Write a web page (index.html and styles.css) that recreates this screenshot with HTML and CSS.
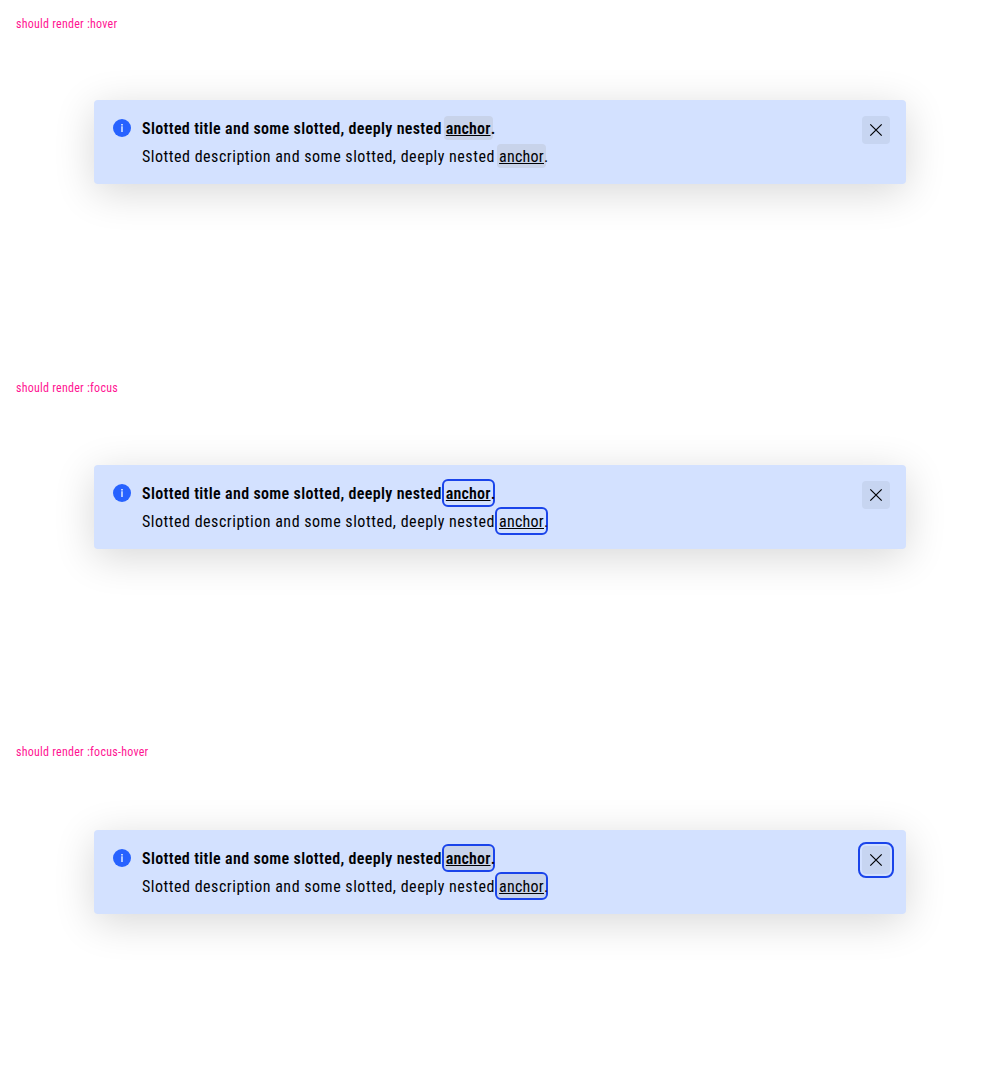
FILE: index.html
```html
<!DOCTYPE html>
<html lang="en">
<head>
<meta charset="utf-8">
<title>Banner states</title>
<link rel="stylesheet" href="styles.css">
</head>
<body>
<section class="state state--hover">
  <p class="label">should render :hover</p>
  <div class="banner">
    <svg class="info" viewBox="0 0 24 24"><circle cx="12" cy="12" r="9"/><path d="M11.1 8h1.8v1.5h-1.8zM11.2 10.3h1.6V16h-1.6z"/></svg>
    <div class="content">
      <h5 class="title">Slotted title and some slotted, deeply nested <a class="anchor">anchor</a>.</h5>
      <p class="description">Slotted description and some slotted, deeply nested <a class="anchor">anchor</a>.</p>
    </div>
    <button class="close" aria-label="Close"><svg viewBox="0 0 28 28"><path d="M8.3 8.3l11.4 11.4M19.7 8.3L8.3 19.7"/></svg></button>
  </div>
</section>
<section class="state state--focus">
  <p class="label">should render :focus</p>
  <div class="banner">
    <svg class="info" viewBox="0 0 24 24"><circle cx="12" cy="12" r="9"/><path d="M11.1 8h1.8v1.5h-1.8zM11.2 10.3h1.6V16h-1.6z"/></svg>
    <div class="content">
      <h5 class="title">Slotted title and some slotted, deeply nested <a class="anchor">anchor</a>.</h5>
      <p class="description">Slotted description and some slotted, deeply nested <a class="anchor">anchor</a>.</p>
    </div>
    <button class="close" aria-label="Close"><svg viewBox="0 0 28 28"><path d="M8.3 8.3l11.4 11.4M19.7 8.3L8.3 19.7"/></svg></button>
  </div>
</section>
<section class="state state--focus-hover">
  <p class="label">should render :focus-hover</p>
  <div class="banner">
    <svg class="info" viewBox="0 0 24 24"><circle cx="12" cy="12" r="9"/><path d="M11.1 8h1.8v1.5h-1.8zM11.2 10.3h1.6V16h-1.6z"/></svg>
    <div class="content">
      <h5 class="title">Slotted title and some slotted, deeply nested <a class="anchor">anchor</a>.</h5>
      <p class="description">Slotted description and some slotted, deeply nested <a class="anchor">anchor</a>.</p>
    </div>
    <button class="close" aria-label="Close"><svg viewBox="0 0 28 28"><path d="M8.3 8.3l11.4 11.4M19.7 8.3L8.3 19.7"/></svg></button>
  </div>
</section>
</body>
</html>
```
FILE: styles.css
```css
* { box-sizing: border-box; }
body {
  margin: 0;
  background: #fff;
  color: #010205;
  font-family: Roboto, "Liberation Sans", sans-serif;
  font-stretch: 87.5%;
}
.state { height: 364px; padding-top: 16px; }
.label {
  margin: 0 16px;
  height: 16px;
  font-size: 12px;
  line-height: 17px;
  letter-spacing: 0.25px;
  color: #ff1493;
}
.banner {
  display: flex;
  align-items: flex-start;
  gap: 8px;
  width: 812px;
  height: 84px;
  margin: 68px auto 0;
  padding: 16px;
  border-radius: 4px;
  background: #d3e1ff;
  box-shadow: 0 8px 40px rgba(0, 0, 0, 0.16);
}
.state--focus .banner { margin-top: 69px; }
.state--focus-hover .banner { margin-top: 70px; }
.info { width: 24px; height: 24px; flex: none; }
.info circle { fill: #2762ff; }
.info path { fill: #d3e1ff; }
.content { flex: 1; display: grid; gap: 4px; white-space: nowrap; }
.title, .description { margin: 0; height: 24px; font-size: 16px; line-height: 26px; }
.title { font-weight: 600; letter-spacing: 0.335px; }
.description { font-weight: 400; letter-spacing: 0.51px; }
.anchor {
  display: inline-block;
  width: 49px;
  height: 24px;
  margin: 0 -2px;
  padding: 0 2px;
  border-radius: 4px;
  text-decoration: underline;
  text-decoration-thickness: 1px;
  text-underline-offset: 1px;
}
.title .anchor { letter-spacing: 0.15px; }
.description .anchor { letter-spacing: 0.25px; }
.state--hover .anchor, .state--focus-hover .anchor { background: #c8d3ea; }
.state--focus .anchor, .state--focus-hover .anchor { outline: 2px solid #1a44ea; }
.close {
  width: 28px;
  height: 28px;
  padding: 0;
  border: 0;
  border-radius: 4px;
  background: #c7d5f1;
}
.close svg { display: block; width: 28px; height: 28px; }
.close path { fill: none; stroke: #010205; stroke-width: 1.2; }
.state--focus-hover .close { outline: 2px solid #1a44ea; outline-offset: 2px; }
```
